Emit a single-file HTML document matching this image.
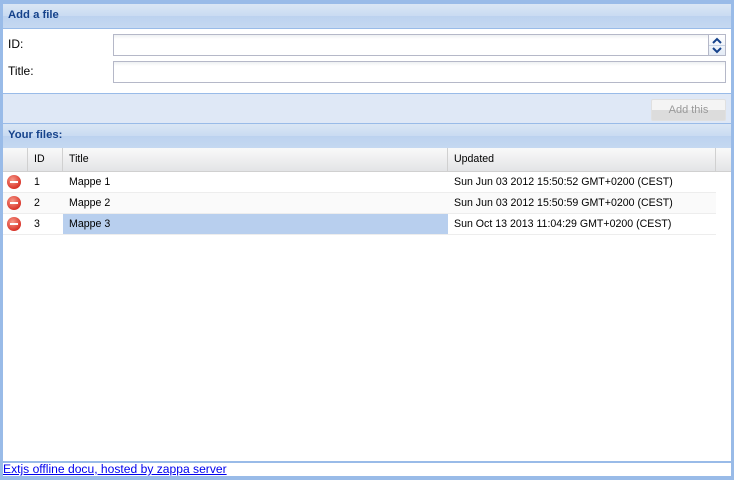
<!DOCTYPE html>
<html><head><meta charset="utf-8"><style>
*{box-sizing:border-box;margin:0;padding:0}
body{width:734px;height:480px;background:#99bbe8;font-family:"Liberation Sans",sans-serif;position:relative;overflow:hidden}
.a{position:absolute}
.hdr{background:linear-gradient(#dae6f4,#c9dbf2 50%,#bcd2ef 50%,#c5d8f1);border:1px solid #99bbe8;color:#15428b;font-weight:bold;font-size:11.3px;padding:5px 0 0 5px}
.lbl{font-size:12px;color:#000}
.inp{background:linear-gradient(#eef0f2,#fff 4px);border:1px solid #b5b8c8}
.row{font-size:10.6px;color:#000;height:21px;border-bottom:1px solid #ededed;width:713px}
.row div{position:absolute;top:4px}
.ic{position:absolute;left:4px;top:3px;width:14px;height:14px;border-radius:50%;background:radial-gradient(circle at 40% 35%,#f79a8a,#d9352a 70%,#b52a20);}
.ic:after{content:"";position:absolute;left:3px;top:6px;width:8px;height:2px;background:#fff}
</style></head><body>
<div class="a" style="left:2px;top:2px;width:730px;height:476px;background:#fff;border:1px solid #99bbe8"></div>
<div class="a hdr" style="left:2px;top:3px;width:730px;height:26px">Add a file</div>
<div class="a lbl" style="left:8px;top:37px">ID:</div>
<div class="a lbl" style="left:8px;top:64px">Title:</div>
<div class="a inp" style="left:113px;top:34px;width:596px;height:22px"></div>
<div class="a" style="left:708px;top:34px;width:18px;height:22px;border:1px solid #b5b8c8;background:linear-gradient(#fff,#e3ebf5)">
<svg width="16" height="20" style="position:absolute;left:0;top:0"><path d="M4 8 L8 4 L12 8 M4 13 L8 17 L12 13" fill="none" stroke="#15428b" stroke-width="2"/><line x1="0" y1="10.5" x2="16" y2="10.5" stroke="#c6d2e4"/></svg></div>
<div class="a inp" style="left:113px;top:61px;width:613px;height:22px"></div>
<div class="a" style="left:2px;top:93px;width:730px;height:31px;background:#dfe8f6;border-top:1px solid #99bbe8;border-left:1px solid #99bbe8;border-right:1px solid #99bbe8"></div>
<div class="a" style="left:651px;top:99px;width:75px;height:22px;border:1px solid #e0e0e0;border-radius:2px;background:linear-gradient(#f4f4f4 50%,#dcdcdc 50%);color:#999;font-size:11px;text-align:center;line-height:21px">Add this</div>
<div class="a hdr" style="left:2px;top:123px;width:730px;height:26px">Your files:</div>
<div class="a" style="left:3px;top:148px;width:728px;height:24px;background:linear-gradient(#f9f9f9,#e3e4e6);border-bottom:1px solid #d0d0d0;font-size:10.6px">
<div class="a" style="left:24px;top:0;height:23px;border-left:1px solid #d0d0d0"></div>
<div class="a" style="left:59px;top:0;height:23px;border-left:1px solid #d0d0d0"></div>
<div class="a" style="left:444px;top:0;height:23px;border-left:1px solid #d0d0d0"></div>
<div class="a" style="left:712px;top:0;height:23px;border-left:1px solid #d0d0d0"></div>
<div class="a" style="left:31px;top:5px">ID</div>
<div class="a" style="left:66px;top:5px">Title</div>
<div class="a" style="left:451px;top:5px">Updated</div>
</div>
<div class="a row" style="left:3px;top:172px;background:#fff"><i class="ic"></i><div style="left:31px">1</div><div style="left:66px">Mappe 1</div><div style="left:451px">Sun Jun 03 2012 15:50:52 GMT+0200 (CEST)</div></div>
<div class="a row" style="left:3px;top:193px;background:#fafafa"><i class="ic"></i><div style="left:31px">2</div><div style="left:66px">Mappe 2</div><div style="left:451px">Sun Jun 03 2012 15:50:59 GMT+0200 (CEST)</div></div>
<div class="a row" style="left:3px;top:214px;background:#fff"><span class="a" style="left:60px;top:0;width:385px;height:20px;background:#b8cfee"></span><i class="ic"></i><div style="left:31px">3</div><div style="left:66px">Mappe 3</div><div style="left:451px">Sun Oct 13 2013 11:04:29 GMT+0200 (CEST)</div></div>
<div class="a" style="left:2px;top:461px;width:730px;height:2px;background:#99bbe8"></div>
<a class="a" href="#" style="left:3px;top:462px;font-size:12.1px;color:#0000ee;text-decoration:underline">Extjs offline docu, hosted by zappa server</a>
<div class="a" style="left:0;top:476px;width:734px;height:4px;background:#99bbe8"></div>
</body></html>
